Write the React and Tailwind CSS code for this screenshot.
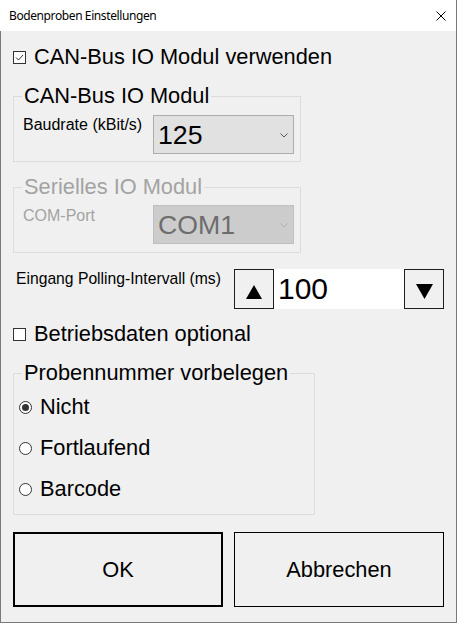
import React from "react";

const SANS = "font-['Liberation_Sans',Arial,sans-serif]";

function CheckBox({ checked }) {
  return (
    <span className="w-[13px] h-[13px] border border-[#333333] bg-white flex items-center justify-center shrink-0">
      {checked && (
        <svg width="11" height="11" viewBox="0 0 11 11">
          <path d="M2 5.5 L4.5 8 L9 3" stroke="#333333" strokeWidth="1" fill="none" />
        </svg>
      )}
    </span>
  );
}

function Radio({ checked, label }) {
  return (
    <div className="h-[26px] flex items-center ml-[5px]">
      <span className="w-[13px] h-[13px] rounded-full border border-[#333333] bg-white flex items-center justify-center shrink-0">
        {checked && <span className="w-[7px] h-[7px] rounded-full bg-[#333333]" />}
      </span>
      <span className="ml-[8px] text-[21.8px] leading-[26px]">{label}</span>
    </div>
  );
}

function Chevron({ color }) {
  return (
    <svg width="8" height="5" viewBox="0 0 8 5" className="mt-[2px]">
      <path d="M0.5 0.5 L4 4 L7.5 0.5" stroke={color} strokeWidth="1" fill="none" />
    </svg>
  );
}

export default function App() {
  return (
    <div className={`w-[457px] h-[623px] bg-[#f0f0f0] border-r border-b border-[#7a7a7a] flex flex-col text-black ${SANS}`}>
      <div className="h-[31px] bg-white flex items-center justify-between pl-[9px] pr-[10px] shrink-0">
        <span className="text-[12px] tracking-[-0.4px] font-['Noto_Sans',sans-serif] text-black">Bodenproben Einstellungen</span>
        <svg width="10" height="10" viewBox="0 0 10 10">
          <path d="M0.5 0.5 L9.5 9.5 M9.5 0.5 L0.5 9.5" stroke="#000000" strokeWidth="1" />
        </svg>
      </div>

      <div className="flex-1 border-l border-[#7a7a7a] flex flex-col">
        <div className="mt-[13px] ml-[12px] h-[26px] flex items-center">
          <CheckBox checked />
          <span className="ml-[8px] text-[21.8px] leading-[26px]">CAN-Bus IO Modul verwenden</span>
        </div>

        <fieldset className="mt-[14px] ml-[12px] w-[288px] border border-[#dcdcdc] p-0 pb-[7px]">
          <legend className="ml-[8px] px-[2px] text-[21.8px] leading-[24px]">CAN-Bus IO Modul</legend>
          <div className="flex items-start">
            <span className="ml-[9px] mt-[8px] text-[16px] leading-[18px]">Baudrate (kBit/s)</span>
            <div className="ml-auto mr-[6px] mt-[7px] w-[141px] h-[39px] bg-[#e1e1e1] border border-[#adadad] flex items-center justify-between pl-[4px] pr-[5px]">
              <span className="text-[26.67px] leading-[30px]">125</span>
              <Chevron color="#555555" />
            </div>
          </div>
        </fieldset>

        <fieldset className="mt-[13px] ml-[12px] w-[288px] border border-[#dcdcdc] p-0 pb-[8px]">
          <legend className="ml-[8px] px-[2px] text-[21.8px] leading-[24px] text-[#a3a3a3]">Serielles IO Modul</legend>
          <div className="flex items-start">
            <span className="ml-[9px] mt-[8px] text-[16px] leading-[18px] text-[#a3a3a3]">COM-Port</span>
            <div className="ml-auto mr-[6px] mt-[6px] w-[141px] h-[39px] bg-[#cccccc] border border-[#bfbfbf] flex items-center justify-between pl-[4px] pr-[5px]">
              <span className="text-[26.67px] leading-[30px] text-[#6d6d6d]">COM1</span>
              <Chevron color="#b0b0b0" />
            </div>
          </div>
        </fieldset>

        <div className="mt-[16px] h-[40px] flex items-start">
          <span className="ml-[15px] w-[218px] mt-[1px] text-[15.7px] leading-[18px]">Eingang Polling-Intervall (ms)</span>
          <div className="w-[40px] h-[40px] border border-[#1e1e1e] flex items-center justify-center pt-[5px] shrink-0">
            <svg width="16" height="14" viewBox="0 0 16 14">
              <polygon points="8,0 16,14 0,14" fill="#000000" />
            </svg>
          </div>
          <div className="w-[130px] h-[40px] bg-white flex items-center pl-[4px]">
            <span className="text-[30px] leading-[34px]">100</span>
          </div>
          <div className="w-[40px] h-[40px] border border-[#1e1e1e] flex items-center justify-center pt-[5px] shrink-0">
            <svg width="17" height="15" viewBox="0 0 17 15">
              <polygon points="0,0 17,0 8.5,15" fill="#000000" />
            </svg>
          </div>
        </div>

        <div className="mt-[12px] ml-[12px] h-[26px] flex items-center">
          <CheckBox />
          <span className="ml-[8px] text-[21.8px] leading-[26px]">Betriebsdaten optional</span>
        </div>

        <fieldset className="mt-[14px] ml-[12px] w-[302px] border border-[#dcdcdc] p-0 pb-[12px]">
          <legend className="ml-[8px] px-[2px] text-[21.8px] leading-[24px]">Probennummer vorbelegen</legend>
          <div className="flex flex-col gap-[15px] pt-[9px]">
            <Radio checked label="Nicht" />
            <Radio label="Fortlaufend" />
            <Radio label="Barcode" />
          </div>
        </fieldset>

        <div className="mt-[17px] ml-[12px] flex">
          <button className="w-[210px] h-[75px] border-2 border-black bg-[#f0f0f0] text-[21.8px] leading-[26px] flex items-center justify-center">OK</button>
          <button className="ml-[11px] w-[210px] h-[75px] border border-black bg-[#f0f0f0] text-[21.8px] leading-[26px] flex items-center justify-center">Abbrechen</button>
        </div>
      </div>
    </div>
  );
}
